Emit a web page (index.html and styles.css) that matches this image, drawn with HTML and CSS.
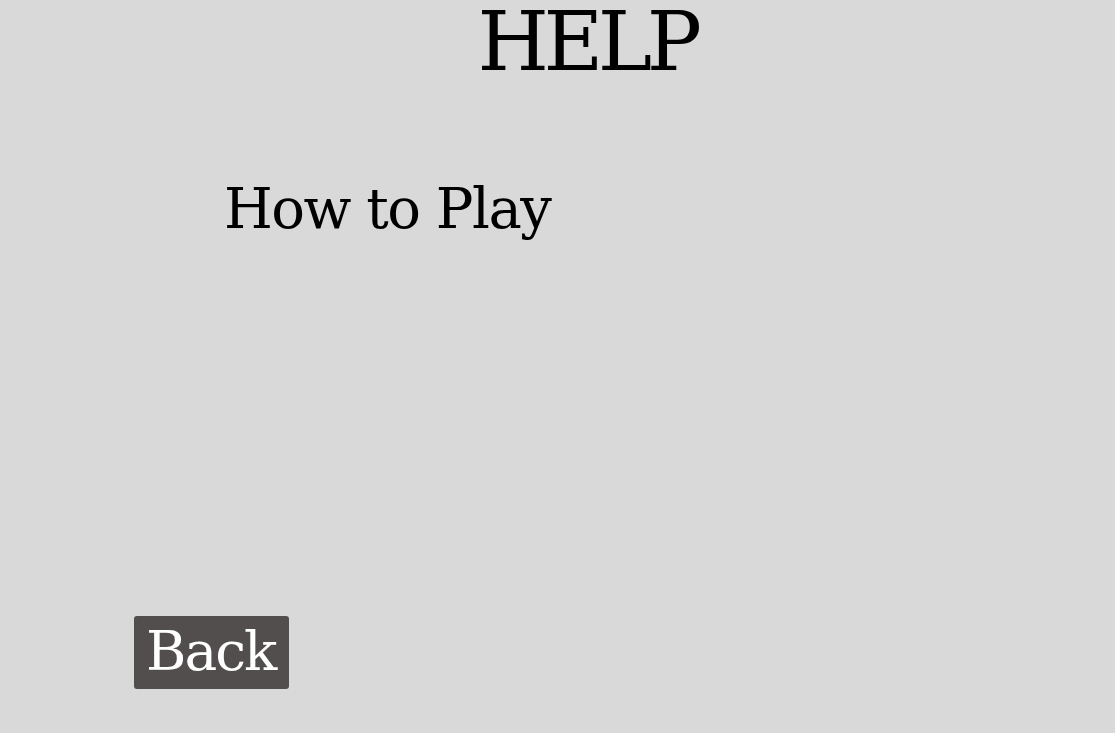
FILE: index.html
```html
<!DOCTYPE html>
<html>
<head>
<meta charset="utf-8">
<link rel="stylesheet" href="styles.css">
</head>
<body>
<main class="page">
  <h1 class="title">HELP</h1>
  <h2 class="subtitle">How to Play</h2>
  <div class="spacer"></div>
  <button class="back">Back</button>
</main>
</body>
</html>
```
FILE: styles.css
```css
html, body {
  margin: 0;
  padding: 0;
  background: #d9d9d9;
  height: 100%;
}
.page {
  font-family: "Roboto Slab", "DejaVu Serif", serif;
  color: #000;
  display: flex;
  flex-direction: column;
  height: 733px;
  box-sizing: border-box;
}
.title {
  margin: 0;
  font-weight: normal;
  font-size: 82px;
  letter-spacing: -5.5px;
  line-height: 84px;
  text-align: center;
  padding-left: 59px;
}
.subtitle {
  margin: 91px 0 0 224px;
  font-weight: normal;
  font-size: 56px;
  letter-spacing: -1.5px;
  line-height: 1.2;
}
.spacer { flex: 1; }
.back {
  align-self: flex-start;
  margin: 0 0 44px 134px;
  font-family: inherit;
  font-size: 55px;
  letter-spacing: -2px;
  line-height: 1;
  color: #fff;
  background: #524e4d;
  border: none;
  border-radius: 3px;
  padding: 0 0 2px 12px;
  text-align: left;
  height: 73px;
  width: 155px;
}
```
